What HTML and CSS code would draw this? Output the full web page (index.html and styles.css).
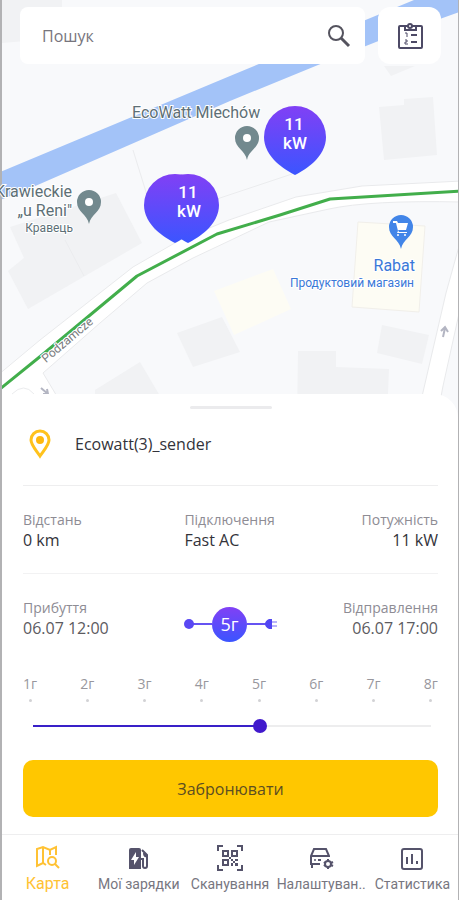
FILE: index.html
```html
<!DOCTYPE html>
<html lang="uk">
<head>
<meta charset="utf-8">
<meta name="viewport" content="width=device-width, initial-scale=1">
<title>Карта</title>
<link rel="stylesheet" href="styles.css">
</head>
<body>
<div class="app">
  <main class="screen">
    <section class="map">
      <svg class="map-canvas" viewBox="0 0 456 418" preserveAspectRatio="xMidYMin slice" role="img" aria-label="Карта">
        <defs>
          <linearGradient id="marker" x1="0" y1="0" x2="0" y2="1">
            <stop offset="0" stop-color="#8140f5"/>
            <stop offset="1" stop-color="#3b55ff"/>
          </linearGradient>
          <path id="drop" fill="url(#marker)" d="M0 38C-10 33-31 20-31 0A31 31 0 0 1 31 0C31 20 10 33 0 38Z"/>
          <path id="poi" d="M0 17C-2 7-12 5-12-5A12 12 0 0 1 12-5C12 5 2 7 0 17Z"/>
          <clipPath id="ground"><path d="M2 0H458V420H2Z"/></clipPath>
        </defs>
        <g transform="translate(-2 0)">
          <g clip-path="url(#ground)">
            <path fill="#f8f9fb" d="M0 0H462V420H0Z"/>
            <g class="building">
              <path d="M2 0H62V38L2 43Z"/>
              <path d="M384 66L415 66L391 76Z"/>
              <path d="M379 107L404 105V99L433 97L437 155L384 160Z"/>
              <path d="M10 227L116 193L142 243L28 309L8 271L24 258Z"/>
              <path d="M177 333L222 317L240 352L193 367Z"/>
              <path d="M95 390L140 362L160 396V418H95Z"/>
              <path d="M298 351H336V367L389 369L387 418H297Z"/>
              <path d="M382 325L429 335L422 364L377 353Z"/>
            </g>
            <path class="seam" d="M65 240L84 276M133 150L146 192L155 230M214 200L292 174"/>
            <path fill="#fdfcf4" stroke="#f1efea" d="M358 222L425 226L419 312L352 307Z"/>
            <path fill="#fdfcf4" d="M214 291L273 269L291 309L234 335Z"/>
            <path fill="#a3c3f8" d="M0 172L230 76L414 0H462V11L381 40L318 65L230 101L33 187L0 200Z"/>
            <path class="road" d="M462 236L456 257L446 293L417 418H437L443 386L462 300Z"/>
            <path class="road" d="M-2 375L40 340L133 267L180 240L229 220L296 197L362 186L462 181V202Q370 200 329 209L269 222L229 241L193 258L147 283L100 323L43 373L70 418H-2Z"/>
            <path class="seam" d="M12 394Q24 382 34 394"/>
            <path fill="none" stroke="#42ae4b" stroke-width="3" stroke-linejoin="round" d="M0 389L42 355L137 276L217 234L280 215L330 199L462 191"/>
            <path class="arrow" d="M443 337L445 328M441 331L445 327L448 332M41 388L48 394M47 389L48 394L43 394"/>
          </g>

          <text class="street" text-anchor="middle" transform="translate(70 343) rotate(-40)">Podzamcze</text>
          <g class="place">
            <text x="132" y="118">EcoWatt Miechów</text>
            <text x="72" y="197" text-anchor="end">Krawieckie</text>
            <text x="72" y="216" text-anchor="end">„u Reni"</text>
            <text class="kind" x="73" y="232" text-anchor="end">Кравець</text>
          </g>
          <g class="place shop">
            <text x="415" y="271" text-anchor="end">Rabat</text>
            <text class="kind" x="414" y="287" text-anchor="end">Продуктовий магазин</text>
          </g>
          <use href="#poi" x="247" y="143" fill="#72898e"/>
          <circle cx="247" cy="138" r="4" fill="#fff"/>
          <use href="#poi" x="89" y="207" fill="#72898e"/>
          <circle cx="89" cy="202" r="4" fill="#fff"/>
          <use href="#poi" x="401" y="232" fill="#4285e8"/>
          <path fill="#fff" d="M393 221H397L398 223H408L406 230H398L399 232H407V233H397L398 231L396 223H393Z"/>
          <circle cx="398" cy="235" r="1" fill="#fff"/><circle cx="405" cy="235" r="1" fill="#fff"/>

          <use href="#drop" x="295" y="137"/>
          <use href="#drop" x="175" y="205"/>
          <use href="#drop" x="188" y="205"/>
          <g class="power" text-anchor="middle">
            <text x="294" y="130">11</text><text x="295" y="149">kW</text>
            <text x="188" y="198">11</text><text x="189" y="217">kW</text>
          </g>
        </g>
      </svg>
      <form class="search" role="search">
        <div class="search-box">
          <input class="search-input" type="text" placeholder="Пошук" aria-label="Пошук">
          <button class="icon-button" type="button" aria-label="Шукати">
            <svg width="24" height="24" viewBox="0 0 24 24" fill="none" stroke="#54535e" stroke-width="2"><circle cx="9" cy="9" r="7"/><path d="M14 14L22 22" stroke-width="3"/></svg>
          </button>
        </div>
        <button class="list-button" type="button" aria-label="Список">
          <svg width="28" height="28" viewBox="0 0 28 28" fill="none" stroke="#4d4a66" stroke-width="2"><rect x="3" y="4" width="23" height="22" rx="1"/><path d="M9 4V8H20V4"/><circle cx="14" cy="4" r="2" fill="#fff"/><path d="M15 13H21M15 20H21"/><path stroke-width="1" d="M9 11H11V15M9 18H11V20H9V22H12"/></svg>
        </button>
      </form>
    </section>

    <section class="sheet">
      <div class="handle"></div>
      <header class="station">
        <svg width="22" height="30" viewBox="0 0 22 30"><path fill="none" stroke="#ffc21c" stroke-width="3" d="M11 27C7 21 2 16 2 11A9 9 0 0 1 20 11C20 16 15 21 11 27Z"/><circle cx="11" cy="11" r="4" fill="#ffb80d"/></svg>
        <h1 class="station-name">Ecowatt(3)_sender</h1>
      </header>
      <dl class="facts details">
        <div class="fact"><dt>Відстань</dt><dd>0 km</dd></div>
        <div class="fact"><dt>Підключення</dt><dd>Fast AC</dd></div>
        <div class="fact end"><dt>Потужність</dt><dd>11 kW</dd></div>
      </dl>
      <div class="facts times">
        <dl class="fact"><dt>Прибуття</dt><dd>06.07 12:00</dd></dl>
        <div class="duration">
          <svg width="28" height="12" viewBox="0 0 28 12"><path stroke="#6553f2" stroke-width="2" d="M5 6H28"/><circle cx="5" cy="6" r="5" fill="#5947f3"/></svg>
          <span class="hours">5г</span>
          <svg width="30" height="12" viewBox="0 0 30 12"><path stroke="#6553f2" stroke-width="2" d="M0 6H20"/><path fill="#5145f3" d="M25 1V11H22Q18 9 18 6Q18 3 22 1Z"/><path stroke="#b9b4fa" stroke-width="2" d="M25 4H30M25 8H30"/></svg>
        </div>
        <dl class="fact end"><dt>Відправлення</dt><dd>06.07 17:00</dd></dl>
      </div>
      <div class="range">
        <div class="ticks">
          <span>1г</span><span>2г</span><span>3г</span><span>4г</span><span>5г</span><span>6г</span><span>7г</span><span>8г</span>
        </div>
        <input class="slider" type="range" min="1" max="8" value="5" aria-label="Тривалість, годин">
      </div>
      <button class="book" type="button">Забронювати</button>
    </section>
  </main>

  <nav class="tabs">
    <a class="tab active" href="#map">
      <svg width="28" height="28" viewBox="0 0 28 28" fill="none" stroke="currentColor" stroke-width="2"><path d="M12 21L9 19L3 22V5L9 3L16 6L22 3V11M9 3V19M16 6V11"/><circle cx="18" cy="17" r="4"/><path d="M21 20L25 24"/></svg>
      <span>Карта</span>
    </a>
    <a class="tab" href="#charges">
      <svg width="28" height="28" viewBox="0 0 28 28" fill="none" stroke="currentColor" stroke-width="2"><path fill="currentColor" stroke="none" d="M4 25V6Q4 4 6 4H14Q16 4 16 6V25Z"/><path fill="#fff" stroke="none" d="M11 8L6 16H9V21L14 13H11Z"/><path d="M16 15H18V22Q18 24 20 24Q22 24 22 22V11L17 6M22 12Q19 13 19 9"/></svg>
      <span>Мої зарядки</span>
    </a>
    <a class="tab" href="#scan">
      <svg width="28" height="28" viewBox="0 0 28 28" fill="none" stroke="currentColor" stroke-width="2"><path d="M2 7V2H7M21 2H26V7M26 21V26H21M7 26H2V21"/><path d="M7 7H12V12H7ZM16 7H21V12H16ZM7 16H12V21H7Z"/><path fill="currentColor" stroke="none" d="M15 15H17V17H15ZM17 17H19V19H17ZM19 15H22V17H19ZM15 19H17V22H15ZM19 19H22V22H19ZM13 13H15V15H13Z"/></svg>
      <span>Сканування</span>
    </a>
    <a class="tab" href="#settings">
      <svg width="28" height="28" viewBox="0 0 28 28" fill="none" stroke="currentColor" stroke-width="2"><path d="M13 20H4V12L7 5H19L22 12V13M4 12H22M5 20V24"/><circle cx="8" cy="16" r="1" fill="currentColor" stroke="none"/><path d="M11 16H14"/><circle cx="21" cy="20" r="3"/><path d="M21 15V17M21 23V25M17 18L18 19M24 21L26 22M17 22L18 21M24 19L26 18"/></svg>
      <span>Налаштуван..</span>
    </a>
    <a class="tab" href="#stats">
      <svg width="28" height="28" viewBox="0 0 28 28" fill="none" stroke="currentColor" stroke-width="2"><rect x="4" y="5" width="20" height="20" rx="2"/><path d="M9 13V20M14 10V20M19 17V20"/></svg>
      <span>Статистика</span>
    </a>
  </nav>
</div>
</body>
</html>
```
FILE: styles.css
```css
* { box-sizing: border-box; }

body {
  margin: 0;
  background: #fff;
  font-family: "Open Sans", "Noto Sans", sans-serif;
  color: #33333a;
}

button, input { font: inherit; color: inherit; }

button {
  padding: 0;
  border: 0;
  background: none;
  cursor: pointer;
}

.app, .screen {
  display: flex;
  flex-direction: column;
}

.app {
  min-height: 100vh;
  border-left: 2px solid #b2b2b4;
  border-right: 1px solid #b2b2b4;
}

.screen { flex: 1; }

/* Map */
.map {
  position: relative;
  flex: 1;
  min-height: 240px;
}

.map-canvas {
  position: absolute;
  inset: 0;
  width: 100%;
  height: 100%;
  overflow: visible;
  font-family: Roboto, sans-serif;
}

.building { fill: #f1f2f4; }
.road { fill: #fff; stroke: #e9eaec; }
.seam { fill: none; stroke: #ebecee; }
.arrow { fill: none; stroke: #b3b5c2; stroke-width: 2; }

.place, .street {
  fill: #5d6f76;
  stroke: #fff;
  stroke-width: 2px;
  paint-order: stroke;
}

.place { font-size: 16px; }
.place .kind { font-size: 12px; }
.shop { fill: #3a78d8; }
.street { font-size: 12px; fill: #77797c; }

.power {
  fill: #fff;
  font-size: 17px;
  font-weight: 500;
}

.search {
  position: relative;
  display: flex;
  gap: 13px;
  padding: 7px 17px 0 18px;
}

.search-box {
  display: flex;
  flex: 1;
  align-items: center;
  min-width: 0;
  height: 57px;
  padding: 0 14px 0 22px;
  border-radius: 8px;
  background: #fff;
}

.search-input {
  flex: 1;
  min-width: 0;
  padding: 0;
  border: 0;
  outline: 0;
  background: none;
  font-size: 16px;
}

.search-input::placeholder { color: #77757d; }

.icon-button { display: flex; }

.list-button {
  display: grid;
  place-items: center;
  width: 63px;
  border-radius: 12px;
  background: #fff;
}

/* Station sheet */
.sheet {
  position: relative;
  display: flex;
  flex-direction: column;
  margin-top: -24px;
  padding: 12px 20px 17px 21px;
  border-radius: 24px 24px 0 0;
  background: #fff;
}

.handle {
  align-self: center;
  width: 82px;
  height: 3px;
  border-radius: 2px;
  background: #ebebed;
}

.station {
  display: flex;
  align-items: center;
  gap: 24px;
  height: 77px;
  padding: 0 6px 6px;
  border-bottom: 1px solid #eeeeef;
}

.station-name {
  margin: 0;
  font-size: 16px;
  font-weight: 400;
}

.facts {
  display: flex;
  align-items: center;
  height: 88px;
  margin: 0;
  border-bottom: 1px solid #f2f2f3;
}

.details {
  display: grid;
  grid-template-columns: 7fr 5fr 6fr;
}

.fact { flex: 1 1 0; margin: 0; }

.fact dt {
  color: #8e8c94;
  font-size: 14px;
  line-height: 20px;
}

.fact dd {
  margin: 0;
  font-size: 16px;
  line-height: 20px;
}

.end { text-align: right; }

.times { border-bottom: 0; }
.times dd { color: #5c5b61; }

.duration {
  display: flex;
  align-items: center;
  padding-top: 12px;
}

.hours {
  display: grid;
  place-items: center;
  width: 35px;
  height: 35px;
  border-radius: 50%;
  background: linear-gradient(#8140f5, #3b55ff);
  color: #fff;
  font-size: 18px;
}

.range {
  display: flex;
  flex-direction: column;
  gap: 17px;
  padding: 12px 0 27px;
}

.ticks {
  display: flex;
  justify-content: space-between;
  color: #98979d;
  font-size: 14px;
  line-height: 20px;
}

.ticks span {
  display: flex;
  flex-direction: column;
  align-items: center;
}

.ticks span::after {
  content: "";
  width: 3px;
  height: 3px;
  margin-top: 5px;
  border-radius: 50%;
  background: #d2d2d5;
}

.slider {
  appearance: none;
  height: 14px;
  margin: 0 0 0 3px;
  background:
    linear-gradient(90deg, #3920c8 57%, #ededee 57%)
    center / calc(100% - 14px) 2px no-repeat;
}

.slider::-webkit-slider-thumb {
  appearance: none;
  width: 14px;
  height: 14px;
  border-radius: 50%;
  background: #4119cc;
}

.book {
  height: 57px;
  border-radius: 10px;
  background: #ffc700;
  color: #5c4e22;
  font-size: 16px;
}

/* Bottom navigation */
.tabs {
  display: flex;
  height: 66px;
  border-top: 1px solid #eeeeef;
  font-family: Roboto, sans-serif;
}

.tab {
  display: flex;
  flex: 1 1 0;
  flex-direction: column;
  align-items: center;
  gap: 3px;
  min-width: 0;
  padding-top: 9px;
  color: #55536b;
  font-size: 14px;
  line-height: 18px;
  text-decoration: none;
  white-space: nowrap;
}

.tab span { color: #77767f; }

.active, .active span { color: #ffc234; }
.active { font-size: 16px; }
```
